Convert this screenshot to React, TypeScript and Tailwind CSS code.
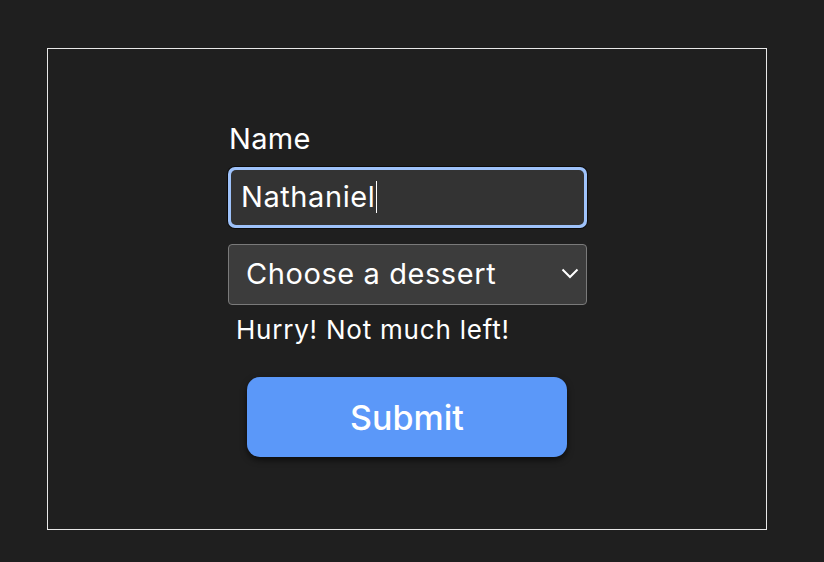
import React from 'react';

export default function App() {
  return (
    <div className="w-[824px] h-[562px] bg-[#1f1f1f] pt-[48px] pl-[47px] font-['Inter','Roboto',sans-serif] text-white">
      <div className="w-[720px] h-[482px] border border-[#e8e8e8] flex flex-col pt-[73px] pl-[180px]">
        <label className="text-[29px] leading-[34px] ml-[1px] tracking-[0.01em]">Name</label>
        <div className="mt-[11px] w-[359px] h-[61px] rounded-[7px] bg-[#9ec2fa] p-[3px] ring-1 ring-black/60">
          <div className="h-full rounded-[5px] bg-[#333333] flex items-center pl-[10px] pb-[2px] text-[29px] tracking-[0.02em]">
            Nathaniel<span className="w-px h-[32px] bg-white ml-[1px]" />
          </div>
        </div>
        <div className="mt-[16px] w-[359px] h-[61px] rounded-[4px] bg-[#3c3c3c] border border-[#7a7a7a] flex items-center justify-between pl-[17px] pr-[7px] pb-[2px] text-[29px] tracking-[0.02em]">
          <span>Choose a dessert</span>
          <svg width="18" height="11" viewBox="0 0 18 11" fill="none">
            <path d="M1.5 1.5 L9 9 L16.5 1.5" stroke="white" strokeWidth="2" />
          </svg>
        </div>
        <p className="mt-[10px] ml-[8px] text-[26px] leading-[30px] tracking-[0.03em]">Hurry! Not much left!</p>
        <button className="mt-[32px] ml-[19px] w-[320px] h-[80px] rounded-[13px] bg-[#5b98f9] text-[34px] font-medium shadow-[0_3px_6px_rgba(0,0,0,0.6)]">
          Submit
        </button>
      </div>
    </div>
  );
}
